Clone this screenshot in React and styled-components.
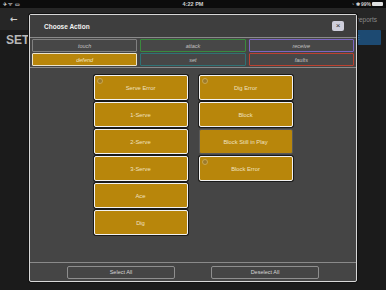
import React from 'react';
import styled, { createGlobalStyle, css } from 'styled-components';

const GlobalStyle = createGlobalStyle`
    html, body {
        margin: 0;
        padding: 0;
        background: #1b1b1b;
        font-family: "Liberation Sans", Arial, sans-serif;
    }
    #root {
        width: 386px;
        height: 290px;
        position: relative;
        overflow: hidden;
    }
`

const tabs = [
    { label: 'touch', color: '#808080' },
    { label: 'attack', color: '#3a8a3e' },
    { label: 'receive', color: '#7b66c4' },
    { label: 'defend', color: '#ece4cc', active: true },
    { label: 'set', color: '#2f7275' },
    { label: 'faults', color: '#bc4130' },
]

const leftActions = [
    { label: 'Serve Error', error: true },
    { label: '1-Serve' },
    { label: '2-Serve' },
    { label: '3-Serve' },
    { label: 'Ace' },
    { label: 'Dig' },
]

const rightActions = [
    { label: 'Dig Error', error: true },
    { label: 'Block' },
    { label: 'Block Still in Play', off: true },
    { label: 'Block Error', error: true },
]

const ActionColumn = ({ items }) => (
    <Column>
        {items.map(item => (
            <Action key={item.label} $off={item.off}>
                {item.error && <Minus />}
                {item.label}
            </Action>
        ))}
    </Column>
)

export default function App() {
    return (
        <>
            <GlobalStyle />
            <StatusBar>
                <StatusSide>✈ ᯤ ▭</StatusSide>
                <Clock>4:22 PM</Clock>
                <StatusSide $right>◔ ✱ 99% <Battery /></StatusSide>
            </StatusBar>
            <NavBar>
                <Back>←</Back>
                <NavLink>reports</NavLink>
            </NavBar>
            <PageHead>
                <Title>SETUP</Title>
                <BlueButton>SAVE</BlueButton>
            </PageHead>

            <Modal>
                <Header>
                    <HeaderTitle>Choose Action</HeaderTitle>
                    <Close>×</Close>
                </Header>
                <Tabs>
                    {tabs.map(tab => (
                        <Tab key={tab.label} $border={tab.color} $active={tab.active}>{tab.label}</Tab>
                    ))}
                </Tabs>
                <Content>
                    <ActionColumn items={leftActions} />
                    <ActionColumn items={rightActions} />
                </Content>
                <Footer>
                    <FooterButton>Select All</FooterButton>
                    <FooterButton>Deselect All</FooterButton>
                </Footer>
            </Modal>
        </>
    )
}

const StatusBar = styled.div`
    height: 8px;
    background: #0c0c0c;
    display: flex;
    align-items: center;
    justify-content: space-between;
    padding: 0 3px;
    color: #cfcfcf;
    font-size: 5px;
    font-weight: bold;
`

const StatusSide = styled.div`
    width: 60px;
    display: flex;
    align-items: center;
    gap: 1px;
    ${p => p.$right && css`
        justify-content: flex-end;
    `}
`

const Clock = styled.div`
    font-size: 5.5px;
`

const Battery = styled.span`
    display: inline-block;
    width: 11px;
    height: 4px;
    background: #e0e0e0;
    border-radius: 1px;
`

const NavBar = styled.div`
    height: 22px;
    background: #262626;
    display: flex;
    align-items: center;
    justify-content: space-between;
    padding: 0 9px 0 10px;
`

const Back = styled.div`
    color: #d0d0d0;
    font-size: 9px;
    font-weight: bold;
    font-family: "DejaVu Sans", sans-serif;
`

const NavLink = styled.div`
    color: #8a8a8a;
    font-size: 6.5px;
`

const PageHead = styled.div`
    display: flex;
    justify-content: space-between;
    align-items: flex-start;
    padding: 0 5px 0 6px;
`

const Title = styled.div`
    color: #b8b8b8;
    font-weight: bold;
    font-size: 12px;
    margin-top: 3px;
`

const BlueButton = styled.div`
    width: 36px;
    height: 15px;
    background: #1d4a72;
    border-radius: 1px;
    color: #2f6a9c;
    font-size: 8px;
    display: flex;
    align-items: center;
    justify-content: flex-end;
    padding-right: 21px;
    box-sizing: border-box;
    font-weight: bold;
`

const Modal = styled.div`
    position: absolute;
    left: 29px;
    top: 14px;
    width: 326px;
    height: 266px;
    border: 1px solid #d8d8d8;
    border-radius: 2px;
    background: #454545;
    display: flex;
    flex-direction: column;
    box-shadow: 0 0 0 1px #111;
`

const Header = styled.div`
    height: 22px;
    background: #3e3e3e;
    display: flex;
    align-items: center;
    justify-content: space-between;
    padding: 0 12px 0 14px;
    border-bottom: 1px solid #8a8a8a;
`

const HeaderTitle = styled.div`
    color: #f2f2f2;
    font-size: 6.5px;
    font-weight: bold;
`

const Close = styled.div`
    width: 12px;
    height: 10px;
    border-radius: 2px;
    background: #cfcfdc;
    color: #333;
    font-size: 8px;
    line-height: 10px;
    text-align: center;
`

const Tabs = styled.div`
    display: grid;
    grid-template-columns: repeat(3, 1fr);
    column-gap: 3px;
    row-gap: 1px;
    padding: 1px 2px 1px 2px;
    background: #454545;
    border-bottom: 1px solid #8a8a8a;
`

const Tab = styled.div`
    height: 11px;
    border: 1px solid ${p => p.$border};
    border-radius: 1px;
    background: #474747;
    color: #c2c2c2;
    font-size: 5.5px;
    font-style: italic;
    display: flex;
    align-items: center;
    justify-content: center;

    ${p => p.$active && css`
        background: #b8860b;
        color: #f1e4c0;
    `}
`

const Content = styled.div`
    flex: 1;
    display: flex;
    justify-content: center;
    align-items: flex-start;
    gap: 11px;
    padding-top: 7px;
    border-bottom: 1px solid #8a8a8a;
`

const Column = styled.div`
    width: 94px;
    display: flex;
    flex-direction: column;
    gap: 2px;
`

const Action = styled.div`
    position: relative;
    height: 23px;
    background: #b8860b;
    border: 1px solid #f2f2f2;
    border-radius: 2px;
    box-shadow: 0 0 0 1px #1a1a1a;
    color: #f0e2c0;
    font-size: 5.8px;
    display: flex;
    align-items: center;
    justify-content: center;

    ${p => p.$off && css`
        border-color: #5a5a5a;
        box-shadow: none;
    `}
`

const Minus = styled.span`
    position: absolute;
    left: 2px;
    top: 2px;
    width: 4px;
    height: 4px;
    border-radius: 50%;
    background: #9c7a2c;
    border: 0.5px solid #c9a850;
`

const Footer = styled.div`
    height: 18px;
    display: flex;
    justify-content: center;
    align-items: center;
    gap: 36px;
`

const FooterButton = styled.div`
    width: 106px;
    height: 11px;
    border: 1px solid #8e8e8e;
    border-radius: 2px;
    color: #d6d6d6;
    font-size: 5.5px;
    display: flex;
    align-items: center;
    justify-content: center;
`
